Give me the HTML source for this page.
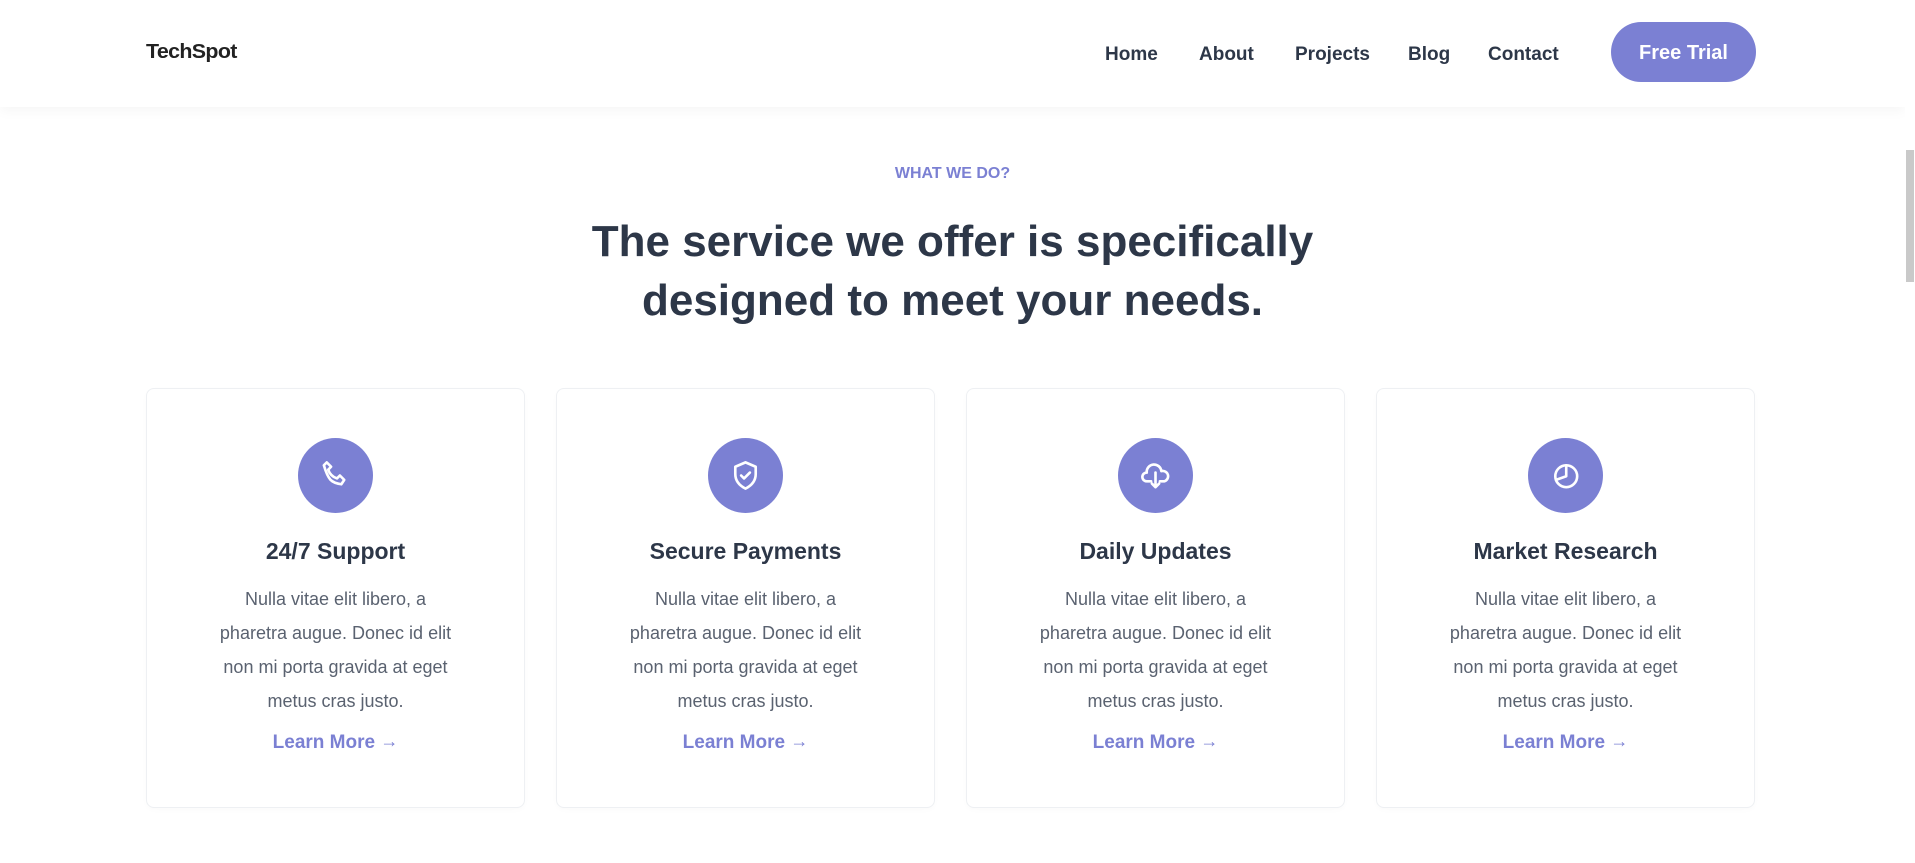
<!DOCTYPE html>
<html><head><meta charset="utf-8"><style>
*{margin:0;padding:0;box-sizing:border-box}
body{width:1915px;height:863px;overflow:hidden;background:#fff;font-family:"Liberation Sans",sans-serif;position:relative}
.nav{position:absolute;left:0;top:0;width:1905px;height:107px;background:#fff;box-shadow:0 4px 12px rgba(0,0,0,.04)}
.logo{position:absolute;left:146px;top:41px;font-size:20px;font-weight:bold;color:#222;letter-spacing:-.6px;transform:scaleX(1.07);transform-origin:left}
.links a{position:absolute;top:44px;font-size:19px;font-weight:bold;color:#2d3748;text-decoration:none}
.btn{position:absolute;left:1611px;top:22px;width:145px;height:60px;border-radius:30px;background:#7b80d3;color:#fff;font-size:20px;font-weight:bold;text-align:center;line-height:62px}
.sb{position:absolute;left:1905px;top:0;width:10px;height:863px;background:#fff}
.sb div{position:absolute;left:1px;top:150px;width:8px;height:132px;background:#c9c9c9}
.eyebrow{position:absolute;left:0;width:1905px;top:165px;text-align:center;font-size:16px;font-weight:bold;color:#7b80d3}
h1{position:absolute;left:0;width:1905px;top:212px;text-align:center;font-size:44px;line-height:59px;color:#2d3748;font-weight:bold}
.card{position:absolute;top:388px;width:379px;height:420px;border:1px solid #eef0f3;border-radius:8px;background:#fff;text-align:center;box-shadow:0 2px 6px rgba(0,0,0,.02)}
.ic{position:absolute;left:151px;top:49px;width:75px;height:75px;border-radius:50%;background:#7b80d3}
.ic svg{position:absolute;left:20px;top:20px}
.card h3{position:absolute;left:0;right:0;top:149px;font-size:23px;color:#2d3748}
.card p{position:absolute;left:0;right:0;top:193px;font-size:18px;line-height:34px;color:#5a6270;white-space:nowrap}
.card .lm{position:absolute;left:0;right:0;top:343px;font-size:19px;font-weight:bold;color:#7b80d3}
.lm span{font-size:18px;font-weight:normal;position:relative;top:-1px}
</style></head><body>
<div class="nav">
<div class="logo">TechSpot</div>
<div class="links"><a style="left:1105px">Home</a><a style="left:1199px">About</a><a style="left:1295px">Projects</a><a style="left:1408px">Blog</a><a style="left:1488px">Contact</a></div>
<div class="btn">Free Trial</div>
</div>
<div class="sb"><div></div></div>
<div class="eyebrow">WHAT WE DO?</div>
<h1>The service we offer is specifically<br>designed to meet your needs.</h1>

<div class="card" style="left:146px"><div class="ic"><svg width="35" height="35" viewBox="0 0 24 24" fill="none" stroke="#fff" stroke-width="1.8" stroke-linecap="round" stroke-linejoin="round"><path d="M6 3l3 3-2 2c1 3 3 5 6 6l2-2 3 3-2 3C9 17 7 15 4 5z"/></svg></div>
<h3>24/7 Support</h3><p>Nulla vitae elit libero, a<br>pharetra augue. Donec id elit<br>non mi porta gravida at eget<br>metus cras justo.</p><div class="lm">Learn More <span>→</span></div></div>

<div class="card" style="left:556px"><div class="ic"><svg width="35" height="35" viewBox="0 0 24 24" fill="none" stroke="#fff" stroke-width="1.8" stroke-linecap="round" stroke-linejoin="round"><path d="M12 3l7 3v5c0 5-3 8-7 10-4-2-7-5-7-10V6z"/><path d="M9 12l2 2 4-4"/></svg></div>
<h3>Secure Payments</h3><p>Nulla vitae elit libero, a<br>pharetra augue. Donec id elit<br>non mi porta gravida at eget<br>metus cras justo.</p><div class="lm">Learn More <span>→</span></div></div>

<div class="card" style="left:966px"><div class="ic"><svg width="35" height="35" viewBox="0 0 24 24" fill="none" stroke="#fff" stroke-width="1.8" stroke-linecap="round" stroke-linejoin="round"><path d="M9 16H6a3 3 0 0 1 0-6 5 5 0 0 1 10-1 3.5 3.5 0 0 1 2 7h-3"/><path d="M12 10v10M9.5 17.5L12 20l2.5-2.5"/></svg></div>
<h3>Daily Updates</h3><p>Nulla vitae elit libero, a<br>pharetra augue. Donec id elit<br>non mi porta gravida at eget<br>metus cras justo.</p><div class="lm">Learn More <span>→</span></div></div>

<div class="card" style="left:1376px"><div class="ic"><svg width="35" height="35" viewBox="0 0 24 24" fill="none" stroke="#fff" stroke-width="1.8" stroke-linecap="round" stroke-linejoin="round"><circle cx="12.5" cy="12.5" r="7.5"/><path d="M12.5 5v7.5L5.5 15"/></svg></div>
<h3>Market Research</h3><p>Nulla vitae elit libero, a<br>pharetra augue. Donec id elit<br>non mi porta gravida at eget<br>metus cras justo.</p><div class="lm">Learn More <span>→</span></div></div>
</body></html>
